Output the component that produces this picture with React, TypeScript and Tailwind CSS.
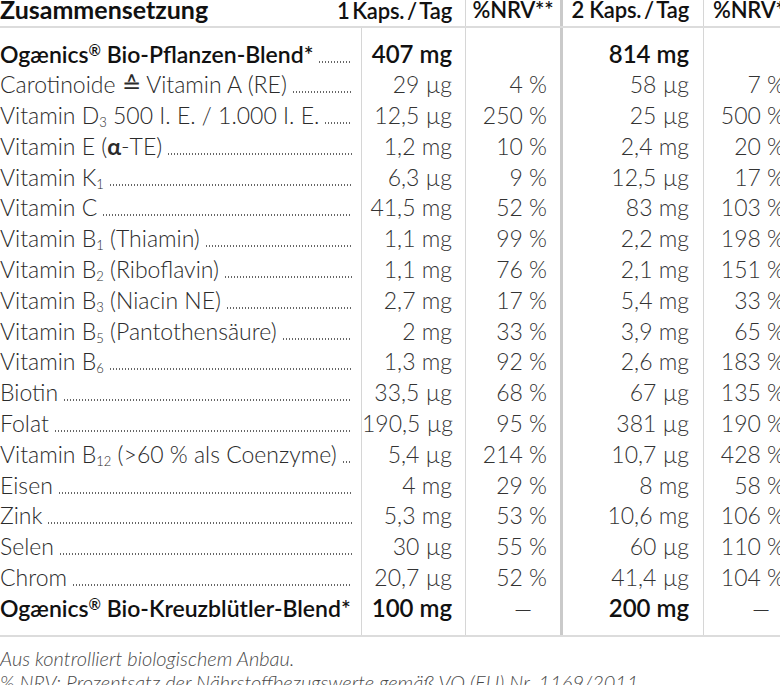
import type { ReactNode } from "react";

type Row = {
  name: ReactNode;
  v1: string;
  n1: string;
  v2: string;
  n2: string;
  bold?: boolean;
};

const Sub = ({ children }: { children: ReactNode }) => (
  <span className="relative top-[3px] text-[13px]">{children}</span>
);

const Reg = () => <span className="relative top-[-7px] text-[15px]">®</span>;

const ROWS: Row[] = [
  { name: <>Ogænics<Reg /> Bio-Pflanzen-Blend*</>, v1: "407 mg", n1: "", v2: "814 mg", n2: "", bold: true },
  { name: "Carotinoide ≙ Vitamin A (RE)", v1: "29 µg", n1: "4 %", v2: "58 µg", n2: "7 %" },
  { name: <>Vitamin D<Sub>3</Sub> 500 I. E. / 1.000 I. E.</>, v1: "12,5 µg", n1: "250 %", v2: "25 µg", n2: "500 %" },
  { name: <>Vitamin E (<span className="font-bold">α</span>-TE)</>, v1: "1,2 mg", n1: "10 %", v2: "2,4 mg", n2: "20 %" },
  { name: <>Vitamin K<Sub>1</Sub></>, v1: "6,3 µg", n1: "9 %", v2: "12,5 µg", n2: "17 %" },
  { name: "Vitamin C", v1: "41,5 mg", n1: "52 %", v2: "83 mg", n2: "103 %" },
  { name: <>Vitamin B<Sub>1</Sub> (Thiamin)</>, v1: "1,1 mg", n1: "99 %", v2: "2,2 mg", n2: "198 %" },
  { name: <>Vitamin B<Sub>2</Sub> (Riboflavin)</>, v1: "1,1 mg", n1: "76 %", v2: "2,1 mg", n2: "151 %" },
  { name: <>Vitamin B<Sub>3</Sub> (Niacin NE)</>, v1: "2,7 mg", n1: "17 %", v2: "5,4 mg", n2: "33 %" },
  { name: <>Vitamin B<Sub>5</Sub> (Pantothensäure)</>, v1: "2 mg", n1: "33 %", v2: "3,9 mg", n2: "65 %" },
  { name: <>Vitamin B<Sub>6</Sub></>, v1: "1,3 mg", n1: "92 %", v2: "2,6 mg", n2: "183 %" },
  { name: "Biotin", v1: "33,5 µg", n1: "68 %", v2: "67 µg", n2: "135 %" },
  { name: "Folat", v1: "190,5 µg", n1: "95 %", v2: "381 µg", n2: "190 %" },
  { name: <>Vitamin B<Sub>12</Sub> (&gt;60 % als Coenzyme)</>, v1: "5,4 µg", n1: "214 %", v2: "10,7 µg", n2: "428 %" },
  { name: "Eisen", v1: "4 mg", n1: "29 %", v2: "8 mg", n2: "58 %" },
  { name: "Zink", v1: "5,3 mg", n1: "53 %", v2: "10,6 mg", n2: "106 %" },
  { name: "Selen", v1: "30 µg", n1: "55 %", v2: "60 µg", n2: "110 %" },
  { name: "Chrom", v1: "20,7 µg", n1: "52 %", v2: "41,4 µg", n2: "104 %" },
  { name: <>Ogænics<Reg /> Bio-Kreuzblütler-Blend*</>, v1: "100 mg", n1: "—", v2: "200 mg", n2: "—", bold: true },
];

const cell = "h-[30.8px] leading-[30.8px] whitespace-nowrap";

function NameCell({ row }: { row: Row }) {
  return (
    <div className={`${cell} flex items-baseline`}>
      <span className={row.bold ? "font-semibold text-[#111]" : "font-light text-[#2b2b2b]"}>{row.name}</span>
      <span className="ml-[5px] h-[2px] flex-1 bg-[radial-gradient(circle,#666_0.6px,transparent_1px)] bg-[length:3px_2px] bg-repeat-x" />
    </div>
  );
}

function ValueCell({ value, bold }: { value: string; bold?: boolean }) {
  const dash = value === "—";
  return (
    <div
      className={`${cell} text-right ${dash ? "pr-[15px]" : ""} ${
        bold && !dash ? "text-[24px] font-semibold text-[#111]" : "font-light text-[#333]"
      }`}
    >
      {value}
    </div>
  );
}

const colPad = "-mt-[10.5px] -mb-[11.5px] pt-[10.5px] pb-[11.5px]";

export default function App() {
  return (
    <div className="h-[685px] w-[780px] overflow-hidden bg-white font-['Lato',sans-serif] text-[23px]">
      <div className="w-[798px]">
        {/* header */}
        <div className="flex h-[28px] items-start whitespace-nowrap border-b-2 border-[#dcdcdc] text-[22px] font-semibold leading-[24px] tracking-[-0.2px] text-[#111]">
          <div className="-mt-[3px] flex w-[465px] items-baseline justify-between pr-[13px]">
            <span className="text-[25px] font-bold tracking-normal">Zusammensetzung</span>
            <span>1{"\u2009"}Kaps.{"\u2009"}/{"\u2009"}Tag</span>
          </div>
          <div className="h-full w-[95px] border-l border-[#d6d6d6] text-center">
            <div className="-mt-[2px]">%NRV**</div>
          </div>
          <div className="h-full w-[143px] border-l-[3px] border-[#cacaca] pr-[14px] text-right">
            <div className="-mt-[2px]">2 Kaps.{"\u2009"}/{"\u2009"}Tag</div>
          </div>
          <div className="h-full w-[95px] border-l border-[#d6d6d6] pl-[9px]">
            <div className="-mt-[2px]">%NRV**</div>
          </div>
        </div>

        {/* body */}
        <div className="flex border-b-2 border-[#dcdcdc] pt-[10.5px] pb-[11.5px]">
          <div className="w-[361px] pr-[9px]">
            {ROWS.map((r, i) => (
              <NameCell key={i} row={r} />
            ))}
          </div>
          <div className={`${colPad} w-[104px] border-l border-[#d6d6d6] pr-[13px]`}>
            {ROWS.map((r, i) => (
              <ValueCell key={i} value={r.v1} bold={r.bold} />
            ))}
          </div>
          <div className={`${colPad} w-[95px] border-l border-[#d6d6d6] pr-[13px]`}>
            {ROWS.map((r, i) => (
              <ValueCell key={i} value={r.n1} />
            ))}
          </div>
          <div className={`${colPad} w-[143px] border-l-[3px] border-[#cacaca] pr-[14px]`}>
            {ROWS.map((r, i) => (
              <ValueCell key={i} value={r.v2} bold={r.bold} />
            ))}
          </div>
          <div className={`${colPad} w-[95px] border-l border-[#d6d6d6] pr-[13px]`}>
            {ROWS.map((r, i) => (
              <ValueCell key={i} value={r.n2} />
            ))}
          </div>
        </div>

        {/* footnotes */}
        <div className="pt-[9px] text-[20px] font-light italic leading-[24px] text-[#4a4a4a]">
          <p>Aus kontrolliert biologischem Anbau.</p>
          <p>% NRV: Prozentsatz der Nährstoffbezugswerte gemäß VO (EU) Nr. 1169/2011</p>
        </div>
      </div>
    </div>
  );
}
